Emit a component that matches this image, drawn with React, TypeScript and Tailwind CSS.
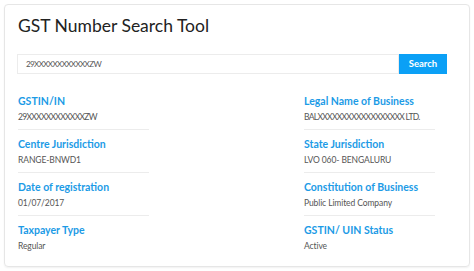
import React from 'react';

type Field = { label: string; value: string; tight?: boolean };

const fields: Field[][] = [
  [
    { label: 'GSTIN/IN', value: '29XXXXXXXXXXXXZW', tight: true },
    { label: 'Centre Jurisdiction', value: 'RANGE-BNWD1' },
    { label: 'Date of registration', value: '01/07/2017' },
    { label: 'Taxpayer Type', value: 'Regular' },
  ],
  [
    { label: 'Legal Name of Business', value: 'BALXXXXXXXXXXXXXXXXXX LTD.', tight: true },
    { label: 'State Jurisdiction', value: 'LVO 060- BENGALURU' },
    { label: 'Constitution of Business', value: 'Public Limited Company' },
    { label: 'GSTIN/ UIN Status', value: 'Active' },
  ],
];

function Column({ items }: { items: Field[] }) {
  return (
    <div className="w-[131px] flex flex-col">
      {items.map((item, i) => (
        <div
          key={i}
          className={`pt-[7px] h-[43px] ${i < items.length - 1 ? 'border-b border-[#ececec]' : ''}`}
        >
          <div className="text-[10.5px] leading-[14px] font-bold text-[#1c9be6] whitespace-nowrap">{item.label}</div>
          <div
            className={`text-[8.5px] leading-[11px] mt-[4px] text-[#555] whitespace-nowrap ${
              item.tight ? 'tracking-[-0.7px]' : 'tracking-[-0.1px]'
            }`}
          >
            {item.value}
          </div>
        </div>
      ))}
    </div>
  );
}

export default function App() {
  return (
    <div className="w-[474px] h-[271px] bg-white p-[4px] font-['Lato',sans-serif]">
      <div className="h-[263px] w-[466px] border border-[#e6e6e6] rounded-[4px] px-[12px] pt-[9px] shadow-[0_1px_2px_rgba(0,0,0,0.06)]">
        <h1 className="text-[17.5px] leading-[24px] text-[#222] ml-[1px]">GST Number Search Tool</h1>
        <div className="flex mt-[16px] mr-[10px]">
          <div className="flex-1 h-[20px] border border-[#ececec] flex items-center pl-[8px] text-[8px] text-[#555] tracking-[-0.6px]">
            29XXXXXXXXXXXXZW
          </div>
          <button className="w-[48px] h-[20px] bg-[#0ba0f6] text-white text-[9.5px] font-bold">Search</button>
        </div>
        <div className="flex justify-between mt-[13px] ml-[1px] mr-[22px]">
          <Column items={fields[0]} />
          <Column items={fields[1]} />
        </div>
      </div>
    </div>
  );
}
